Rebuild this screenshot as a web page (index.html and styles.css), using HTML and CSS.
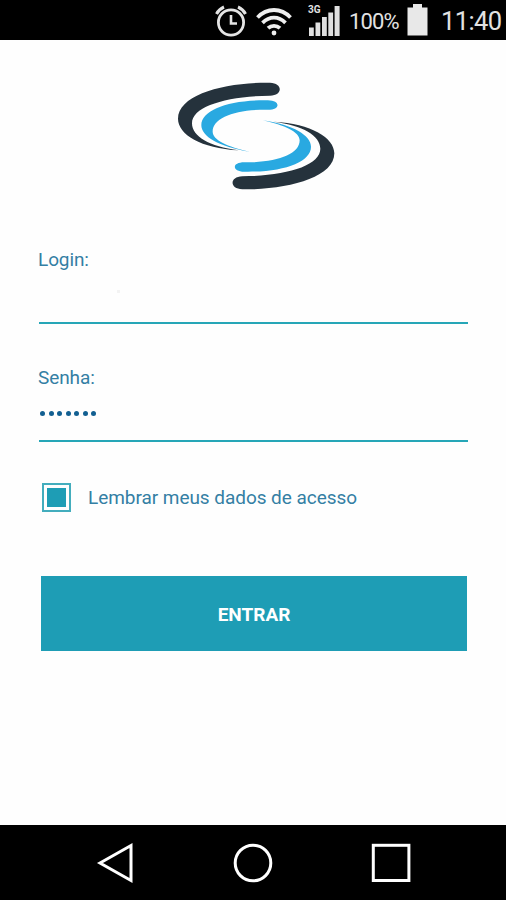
FILE: index.html
```html
<!DOCTYPE html>
<html lang="pt-BR">
  <head>
    <meta charset="utf-8">
    <title>Login</title>
    <link rel="stylesheet" href="styles.css">
  </head>
  <body>
    <header class="status-bar">
      <svg class="alarm" width="34" height="36" viewBox="0 0 34 36" fill="none" stroke="#e4e4e4">
        <circle cx="17" cy="20.500" r="12.600" stroke-width="2.800"/>
        <path d="M17 13V21.500H23" stroke-width="2.600"/>
        <path d="M2.500 12C4 9 6.500 6.500 10 5M24 5C27.500 6.500 30 9 31.500 12" stroke-width="3"/>
      </svg>
      <svg class="wifi" width="36" height="30" viewBox="0 0 36 30" fill="none" stroke="#eee" stroke-width="3.800">
        <path d="M1.500 10.500C11 .5 25 .5 34.500 10.500"/>
        <path d="M6.500 15.800C13.500 9 22.500 9 29.500 15.800"/>
        <path d="M12 21.200C15.500 18 20.500 18 24 21.200"/>
        <circle cx="18" cy="26" r="2.400" fill="#eee" stroke="none"/>
      </svg>
      <div class="signal">
        <span class="network">3G</span>
        <svg width="33" height="32" viewBox="0 0 33 32" fill="#e0e0e0">
          <path d="M1 22.500h4.800V31H1zM7.500 17.500h4.800V31H7.500zM14 12h4.800v19H14zM20.300 7.500h4.800V31h-4.800zM26.600 1h5v30h-5z"/>
        </svg>
      </div>
      <span class="percent">100%</span>
      <svg class="battery" width="21" height="32" viewBox="0 0 21 32" fill="#e8e8e8">
        <path d="M6 0h9v3.500h5.500V31.500H.5V3.500H6z"/>
      </svg>
      <span class="clock">11:40</span>
    </header>

    <main class="content">
      <svg class="logo" width="180" height="130" viewBox="0 0 540 390">
        <defs>
          <g id="swoosh">
            <path fill="#25323c" d="M312 38C180 36 36 72 36 146C36 193 105 235 218 241C130 230 78 199 78 160C78 109 180 79 312 77C351 76 351 39 312 38Z"/>
            <path fill="#29a9e1" d="M306 91C190 89 106 119 106 166C106 199 158 231 250 245C185 230 140 210 140 185C140 142 210 118 306 119C344 119 344 92 306 91Z"/>
          </g>
        </defs>
        <use href="#swoosh"/>
        <use href="#swoosh" transform="rotate(180 270.500 198)"/>
      </svg>

      <form class="login-form">
        <div class="field">
          <span class="label">Login:</span>
          <div class="value"><i class="speck"></i></div>
        </div>
        <div class="field">
          <span class="label">Senha:</span>
          <div class="value password">
            <i></i><i></i><i></i><i></i><i></i><i></i><i></i>
          </div>
        </div>
        <div class="remember">
          <span class="checkbox"></span>
          <span class="remember-text">Lembrar meus dados de acesso</span>
        </div>
        <button class="button" type="button">ENTRAR</button>
      </form>
    </main>

    <nav class="nav-bar">
      <svg width="40" height="44" viewBox="0 0 40 44"><path d="M5 22L36 4.500V39.500Z"/></svg>
      <svg width="40" height="44" viewBox="0 0 40 44"><circle cx="20" cy="22" r="17.800"/></svg>
      <svg width="40" height="44" viewBox="0 0 40 44"><rect x="2.300" y="4.300" width="35.600" height="35.200"/></svg>
    </nav>
  </body>
</html>
```

FILE: styles.css
```css
body {
  font-family: Roboto, sans-serif;
  margin: 0;
  height: 900px;
  display: flex;
  flex-direction: column;
  background-color: #fefefe;
  overflow: hidden;
}
svg {
  display: block;
  flex: none;
}
.status-bar {
  box-sizing: border-box;
  height: 40px;
  flex: none;
  display: flex;
  align-items: flex-start;
  background-color: #000;
  color: #e2e2e2;
  padding-left: 214px;
  white-space: nowrap;
}
.alarm {
  margin-top: 2px;
}
.wifi {
  margin: 7px 0 0 8px;
}
.signal {
  position: relative;
  margin: 5px 0 0 16px;
}
.network {
  position: absolute;
  left: 0;
  top: 0;
  font-size: 10px;
  line-height: 10px;
  font-weight: bold;
}
.percent {
  width: 51px;
  margin-left: 8px;
  font-size: 22px;
  line-height: 44px;
  letter-spacing: -0.9px;
}
.battery {
  margin: 4px 0 0 7px;
}
.clock {
  margin-left: 13px;
  font-size: 25.5px;
  line-height: 42px;
  letter-spacing: -0.6px;
}
.content {
  flex: 1;
}
.logo {
  margin: 30px 0 0 166px;
}
.login-form {
  padding: 48px 38px 0;
}
.field {
  height: 74px;
  margin: 0 0 42px 1px;
  border-bottom: 2px solid #26a6b7;
}
.label {
  display: block;
  margin-left: -1px;
  font-size: 19px;
  line-height: 24px;
  letter-spacing: -0.1px;
  color: #347fa4;
}
.value {
  display: flex;
  height: 50px;
}
.speck {
  width: 3px;
  height: 3px;
  margin: 18px 0 0 78px;
  background-color: #f3f3f3;
}
.password {
  gap: 3.5px;
  padding: 21px 0 0 1px;
  box-sizing: border-box;
}
.password i {
  width: 5px;
  height: 5px;
  border-radius: 50%;
  background-color: #125f91;
}
.remember {
  display: flex;
  align-items: center;
  height: 30px;
  margin-top: -2px;
  padding-left: 4px;
}
.checkbox {
  box-sizing: border-box;
  width: 29px;
  height: 29px;
  padding: 3px;
  border: 2px solid #43adbd;
  background: #1e9db5 content-box;
}
.remember-text {
  margin-left: 17px;
  font-size: 19px;
  letter-spacing: -0.05px;
  color: #347fa4;
}
.button {
  display: block;
  width: 426px;
  height: 75px;
  margin: 64px 0 0 3px;
  padding: 2px 0 0;
  border: none;
  background-color: #1e9db5;
  color: white;
  font-family: inherit;
  font-size: 19px;
  font-weight: bold;
}
.nav-bar {
  height: 75px;
  flex: none;
  display: flex;
  gap: 98px;
  padding: 0 0 0 95px;
  align-items: center;
  background-color: #000;
}
.nav-bar svg {
  fill: none;
  stroke: #fff;
  stroke-width: 3;
}
```
